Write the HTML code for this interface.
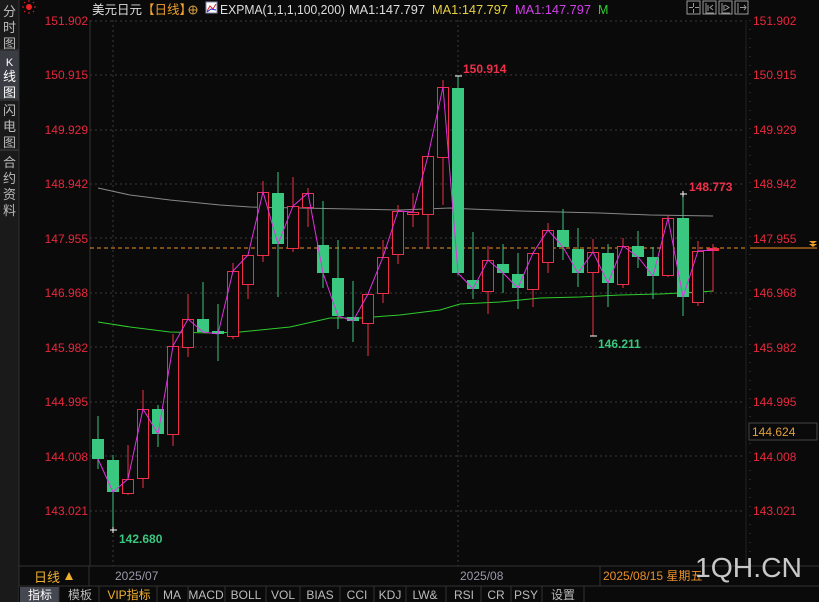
<!DOCTYPE html>
<html><head><meta charset="utf-8"><style>
html,body{margin:0;padding:0;background:#0a0a0a;width:819px;height:602px;overflow:hidden}
svg{display:block}
text{font-family:"Liberation Sans","Noto Sans CJK SC",sans-serif}
</style></head><body>
<svg width="819" height="602" xmlns="http://www.w3.org/2000/svg">
<rect width="819" height="602" fill="#0a0a0a"/>
<!-- sidebar -->
<rect x="0" y="0" width="19" height="602" fill="#1a1a1a"/>
<rect x="0" y="51" width="19" height="48" fill="#3a3d44"/>
<line x1="19" y1="0" x2="19" y2="602" stroke="#333"/>
<line x1="0" y1="50" x2="19" y2="50" stroke="#444"/>
<line x1="0" y1="100" x2="19" y2="100" stroke="#444"/>
<line x1="0" y1="150" x2="19" y2="150" stroke="#444"/>
<g fill="#bbb" font-size="13" text-anchor="middle">
<text x="9.5" y="16">分</text><text x="9.5" y="32">时</text><text x="9.5" y="48">图</text>
<text x="9.5" y="66" fill="#fff" font-size="11">K</text><text x="9.5" y="81" fill="#fff">线</text><text x="9.5" y="97" fill="#fff">图</text>
<text x="9.5" y="115">闪</text><text x="9.5" y="131">电</text><text x="9.5" y="147">图</text>
<text x="9.5" y="167">合</text><text x="9.5" y="183">约</text><text x="9.5" y="199">资</text><text x="9.5" y="215">料</text>
</g>
<!-- icon top-left -->
<circle cx="29" cy="7" r="3" fill="#e22"/>
<g stroke="#e22" stroke-width="1"><line x1="29" y1="0" x2="29" y2="2"/><line x1="29" y1="12" x2="29" y2="14"/><line x1="22" y1="7" x2="24" y2="7"/><line x1="34" y1="7" x2="36" y2="7"/><line x1="24" y1="2" x2="25" y2="3"/><line x1="33" y1="11" x2="34" y2="12"/><line x1="24" y1="12" x2="25" y2="11"/><line x1="33" y1="3" x2="34" y2="2"/></g>
<!-- header -->
<text x="92" y="14" font-size="12.5" fill="#ddd">美元日元</text>
<text x="142" y="14" font-size="12.5" fill="#f0a030">【日线】</text>
<circle cx="193" cy="10" r="4" fill="none" stroke="#d8a040"/><line x1="189" y1="10" x2="197" y2="10" stroke="#d8a040"/><line x1="193" y1="6" x2="193" y2="14" stroke="#d8a040"/>
<rect x="206" y="2" width="11" height="11" fill="#fff" stroke="#88a"/><path d="M207 11 L210 6 L213 9 L216 4" stroke="#d22" fill="none"/><path d="M207 12 L211 9 L216 10" stroke="#22c" fill="none"/>
<text x="220" y="14" font-size="12.5" fill="#ddd" textLength="125" lengthAdjust="spacingAndGlyphs">EXPMA(1,1,1,100,200)</text>
<text x="349" y="14" font-size="12.5" fill="#ddd" textLength="76" lengthAdjust="spacingAndGlyphs">MA1:147.797</text>
<text x="432" y="14" font-size="12.5" fill="#e8d040" textLength="76" lengthAdjust="spacingAndGlyphs">MA1:147.797</text>
<text x="515" y="14" font-size="12.5" fill="#d040e8" textLength="76" lengthAdjust="spacingAndGlyphs">MA1:147.797</text>
<text x="598" y="14" font-size="12.5" fill="#30d030">M</text>
<g fill="none" stroke="#999">
<rect x="687" y="1" width="13" height="13"/><rect x="703" y="1" width="13" height="13"/><rect x="719" y="1" width="13" height="13"/><rect x="735" y="1" width="13" height="13"/>
<path d="M693.5 3v4M693.5 9v4M689 7.5h4M695 7.5h4M706 3v10h8M708 5v6M713 5l-3 2.5l3 2.5M722 3v10h8M724 5v6M725 5l4 2.5l-4 2.5M738 3v10M740 7.5h6M744 5l2 2.5l-2 2.5"/>
</g>
<!-- axis lines -->
<line x1="90" y1="20" x2="90" y2="566" stroke="#333"/>
<line x1="750" y1="20" x2="750" y2="566" stroke="#444" stroke-dasharray="1,8"/>
<line x1="746" y1="20" x2="746" y2="566" stroke="#222"/>
<!-- horizontal grid -->
<g stroke="#3a3a3a" stroke-dasharray="2,3">
<line x1="90" y1="21" x2="745" y2="21"/><line x1="90" y1="75" x2="745" y2="75"/><line x1="90" y1="130" x2="745" y2="130"/><line x1="90" y1="184" x2="745" y2="184"/><line x1="90" y1="238" x2="745" y2="238"/><line x1="90" y1="293" x2="745" y2="293"/><line x1="90" y1="347" x2="745" y2="347"/><line x1="90" y1="402" x2="745" y2="402"/><line x1="90" y1="456" x2="745" y2="456"/><line x1="90" y1="511" x2="745" y2="511"/>
<line x1="113" y1="20" x2="113" y2="566"/><line x1="458" y1="20" x2="458" y2="566"/>
</g>
<!-- left labels -->
<g fill="#e8283c" font-size="12" text-anchor="end">
<text x="88" y="25">151.902</text><text x="88" y="79">150.915</text><text x="88" y="134">149.929</text><text x="88" y="188">148.942</text><text x="88" y="243">147.955</text><text x="88" y="297">146.968</text><text x="88" y="352">145.982</text><text x="88" y="406">144.995</text><text x="88" y="461">144.008</text><text x="88" y="515">143.021</text>
</g>
<g fill="#e8283c" font-size="12">
<text x="753" y="25">151.902</text><text x="753" y="79">150.915</text><text x="753" y="134">149.929</text><text x="753" y="188">148.942</text><text x="753" y="243">147.955</text><text x="753" y="297">146.968</text><text x="753" y="352">145.982</text><text x="753" y="406">144.995</text><text x="753" y="461">144.008</text><text x="753" y="515">143.021</text>
</g>
<rect x="749" y="423" width="68" height="17" fill="#0a0a0a" stroke="#444"/>
<text x="752" y="436" font-size="12" fill="#e0a040">144.624</text>
<!-- orange current line -->
<line x1="90" y1="248" x2="746" y2="248" stroke="#f09020" stroke-dasharray="4,3"/>
<line x1="750" y1="248" x2="817" y2="248" stroke="#f09020"/>
<path d="M809 241h8l-4 3zM809 244h8l-4 3z" fill="#f0a020"/>
<!-- MAs -->
<polyline fill="none" stroke="#888" stroke-width="1" points="98,188 130,195 170,200 220,205 250,207 300,208 350,209 400,210 450,208 470,209 520,211 560,212 600,213 650,215 713,216"/>
<polyline fill="none" stroke="#2ecc2e" stroke-width="1" points="98,322 130,327 170,332 210,333 240,332 290,327 330,318 360,318 400,315 440,310 460,304 500,302 540,298 580,297 620,295 660,294 700,292 713,291"/>
<!-- wicks -->
<g stroke-width="1">
<g stroke="#3ac77f">
<line x1="98" y1="416" x2="98" y2="469"/><line x1="113" y1="455" x2="113" y2="530"/><line x1="158" y1="405" x2="158" y2="447"/><line x1="203" y1="282" x2="203" y2="333"/><line x1="218" y1="304" x2="218" y2="361"/><line x1="278" y1="172" x2="278" y2="297"/><line x1="323" y1="201" x2="323" y2="288"/><line x1="338" y1="240" x2="338" y2="329"/><line x1="353" y1="281" x2="353" y2="342"/><line x1="458" y1="76" x2="458" y2="275"/><line x1="473" y1="232" x2="473" y2="299"/><line x1="503" y1="244" x2="503" y2="293"/><line x1="518" y1="253" x2="518" y2="309"/><line x1="563" y1="209" x2="563" y2="260"/><line x1="578" y1="228" x2="578" y2="287"/><line x1="608" y1="244" x2="608" y2="307"/><line x1="638" y1="231" x2="638" y2="268"/><line x1="653" y1="247" x2="653" y2="299"/><line x1="683" y1="194" x2="683" y2="316"/>
</g>
<g stroke="#f0304a">
<line x1="128" y1="445" x2="128" y2="495"/><line x1="143" y1="390" x2="143" y2="488"/><line x1="173" y1="334" x2="173" y2="446"/><line x1="188" y1="294" x2="188" y2="357"/><line x1="233" y1="263" x2="233" y2="339"/><line x1="248" y1="255" x2="248" y2="299"/><line x1="263" y1="181" x2="263" y2="262"/><line x1="293" y1="177" x2="293" y2="252"/><line x1="308" y1="188" x2="308" y2="227"/><line x1="368" y1="294" x2="368" y2="356"/><line x1="383" y1="240" x2="383" y2="303"/><line x1="398" y1="205" x2="398" y2="264"/><line x1="413" y1="193" x2="413" y2="227"/><line x1="428" y1="156" x2="428" y2="248"/><line x1="443" y1="80" x2="443" y2="205"/><line x1="488" y1="246" x2="488" y2="314"/><line x1="533" y1="253" x2="533" y2="307"/><line x1="548" y1="223" x2="548" y2="273"/><line x1="593" y1="239" x2="593" y2="336"/><line x1="623" y1="238" x2="623" y2="288"/><line x1="668" y1="215" x2="668" y2="277"/><line x1="698" y1="241" x2="698" y2="306"/><line x1="713" y1="244" x2="713" y2="292"/>
</g>
</g>
<!-- green bodies -->
<g fill="#3ac77f">
<rect x="92" y="439" width="12" height="20"/><rect x="107" y="460" width="12" height="32"/><rect x="152" y="409" width="12" height="25"/><rect x="197" y="319" width="12" height="13"/><rect x="212" y="331" width="12" height="3"/><rect x="272" y="193" width="12" height="51"/><rect x="317" y="245" width="12" height="28"/><rect x="332" y="278" width="12" height="38"/><rect x="347" y="317" width="12" height="4"/><rect x="452" y="88" width="12" height="185"/><rect x="467" y="280" width="12" height="9"/><rect x="497" y="264" width="12" height="9"/><rect x="512" y="274" width="12" height="14"/><rect x="557" y="230" width="12" height="17"/><rect x="572" y="249" width="12" height="24"/><rect x="602" y="253" width="12" height="30"/><rect x="632" y="246" width="12" height="11"/><rect x="647" y="257" width="12" height="19"/><rect x="677" y="218" width="12" height="79"/>
</g>
<!-- red bodies -->
<g fill="#0a0a0a" stroke="#f0304a" stroke-width="1">
<rect x="122.5" y="479.5" width="11" height="14"/><rect x="137.5" y="409.5" width="11" height="69"/><rect x="167.5" y="346.5" width="11" height="88"/><rect x="182.5" y="319.5" width="11" height="28"/><rect x="227.5" y="271.5" width="11" height="65"/><rect x="242.5" y="255.5" width="11" height="29"/><rect x="257.5" y="192.5" width="11" height="63"/><rect x="287.5" y="206.5" width="11" height="42"/><rect x="302.5" y="193.5" width="11" height="14"/><rect x="362.5" y="294.5" width="11" height="29"/><rect x="377.5" y="257.5" width="11" height="36"/><rect x="392.5" y="211.5" width="11" height="43"/><rect x="407.5" y="212.5" width="11" height="2"/><rect x="422.5" y="156.5" width="11" height="58"/><rect x="437.5" y="87.5" width="11" height="70"/><rect x="482.5" y="260.5" width="11" height="31"/><rect x="527.5" y="253.5" width="11" height="36"/><rect x="542.5" y="230.5" width="11" height="32"/><rect x="587.5" y="252.5" width="11" height="20"/><rect x="617.5" y="246.5" width="11" height="38"/><rect x="662.5" y="218.5" width="11" height="57"/><rect x="692.5" y="251.5" width="11" height="51"/>
</g>
<rect x="707" y="248" width="12" height="3" fill="#f0304a"/>
<!-- close line -->
<polyline fill="none" stroke="#e030e0" stroke-width="1" points="98,459 113,492 128,479 143,409 158,434 173,346 188,319 203,332 218,334 233,271 248,255 263,192 278,244 293,206 308,193 323,273 338,316 353,321 368,294 383,257 398,211 413,212 428,156 443,87 458,273 473,289 488,260 503,273 518,288 533,253 548,230 563,247 578,273 593,252 608,283 623,246 638,257 653,276 668,218 683,297 698,251 713,250"/>
<!-- extreme markers -->
<g stroke="#fff"><line x1="110" y1="530" x2="117" y2="530"/><line x1="113" y1="527" x2="113" y2="533"/><line x1="455" y1="76" x2="462" y2="76"/><line x1="590" y1="336" x2="597" y2="336"/><line x1="680" y1="194" x2="687" y2="194"/><line x1="683" y1="191" x2="683" y2="197"/></g>
<g font-size="12" font-weight="bold">
<text x="119" y="543" fill="#3ac77f">142.680</text>
<text x="463" y="73" fill="#f0304a">150.914</text>
<text x="598" y="348" fill="#3ac77f">146.211</text>
<text x="689" y="191" fill="#f0304a">148.773</text>
</g>
<!-- date row -->
<line x1="19" y1="566" x2="819" y2="566" stroke="#333"/>
<line x1="89" y1="566" x2="89" y2="586" stroke="#333"/>
<text x="34" y="582" font-size="13" fill="#f0b030">日线</text>
<path d="M65 580l4-8l4 8z" fill="#f0b030"/>
<text x="115" y="580" font-size="12" fill="#99a">2025/07</text>
<text x="460" y="580" font-size="12" fill="#99a">2025/08</text>
<line x1="600" y1="566" x2="600" y2="586" stroke="#333"/>
<text x="603" y="580" font-size="12" fill="#e8902a">2025/08/15 星期五</text>
<text x="695" y="577" font-size="28" fill="#c8c8c8" textLength="107" lengthAdjust="spacingAndGlyphs">1QH.CN</text>
<!-- tabs -->
<rect x="19" y="586" width="800" height="16" fill="#0a0a0a"/>
<line x1="19" y1="586" x2="819" y2="586" stroke="#333"/>
<rect x="20" y="587" width="39" height="15" fill="#454850"/>
<g font-size="12" fill="#bbb" text-anchor="middle" font-family="'Liberation Mono','Noto Sans CJK SC',monospace">
<text x="40" y="599" fill="#fff">指标</text><text x="80" y="599">模板</text><text x="129" y="599" fill="#f0b030">VIP指标</text><text x="172" y="599">MA</text><text x="206" y="599">MACD</text><text x="246" y="599">BOLL</text><text x="283" y="599">VOL</text><text x="320" y="599">BIAS</text><text x="357" y="599">CCI</text><text x="390" y="599">KDJ</text><text x="425" y="599">LW&amp;</text><text x="464" y="599">RSI</text><text x="496" y="599">CR</text><text x="526" y="599">PSY</text><text x="563" y="599">设置</text>
</g>
<g stroke="#333"><line x1="59" y1="586" x2="59" y2="602"/><line x1="99" y1="586" x2="99" y2="602"/><line x1="157" y1="586" x2="157" y2="602"/><line x1="188" y1="586" x2="188" y2="602"/><line x1="225" y1="586" x2="225" y2="602"/><line x1="266" y1="586" x2="266" y2="602"/><line x1="300" y1="586" x2="300" y2="602"/><line x1="340" y1="586" x2="340" y2="602"/><line x1="374" y1="586" x2="374" y2="602"/><line x1="406" y1="586" x2="406" y2="602"/><line x1="446" y1="586" x2="446" y2="602"/><line x1="481" y1="586" x2="481" y2="602"/><line x1="511" y1="586" x2="511" y2="602"/><line x1="542" y1="586" x2="542" y2="602"/><line x1="584" y1="586" x2="584" y2="602"/></g>
</svg>
</body></html>
